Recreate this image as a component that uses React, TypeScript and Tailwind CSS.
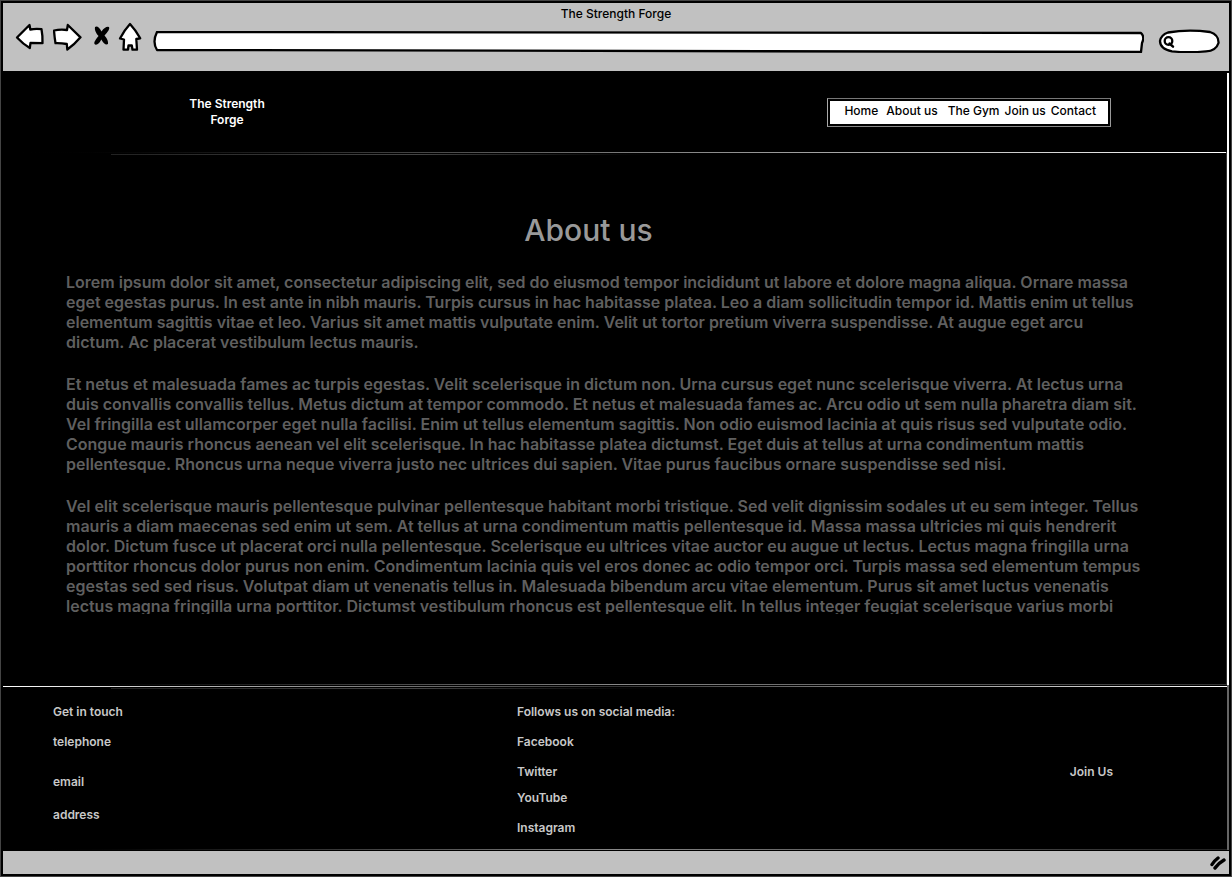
import type { ReactNode } from "react";

const paragraphs: string[][] = [
  [
    "Lorem ipsum dolor sit amet, consectetur adipiscing elit, sed do eiusmod tempor incididunt ut labore et dolore magna aliqua. Ornare massa",
    "eget egestas purus. In est ante in nibh mauris. Turpis cursus in hac habitasse platea. Leo a diam sollicitudin tempor id. Mattis enim ut tellus",
    "elementum sagittis vitae et leo. Varius sit amet mattis vulputate enim. Velit ut tortor pretium viverra suspendisse. At augue eget arcu",
    "dictum. Ac placerat vestibulum lectus mauris.",
  ],
  [
    "Et netus et malesuada fames ac turpis egestas. Velit scelerisque in dictum non. Urna cursus eget nunc scelerisque viverra. At lectus urna",
    "duis convallis convallis tellus. Metus dictum at tempor commodo. Et netus et malesuada fames ac. Arcu odio ut sem nulla pharetra diam sit.",
    "Vel fringilla est ullamcorper eget nulla facilisi. Enim ut tellus elementum sagittis. Non odio euismod lacinia at quis risus sed vulputate odio.",
    "Congue mauris rhoncus aenean vel elit scelerisque. In hac habitasse platea dictumst. Eget duis at tellus at urna condimentum mattis",
    "pellentesque. Rhoncus urna neque viverra justo nec ultrices dui sapien. Vitae purus faucibus ornare suspendisse sed nisi.",
  ],
  [
    "Vel elit scelerisque mauris pellentesque pulvinar pellentesque habitant morbi tristique. Sed velit dignissim sodales ut eu sem integer. Tellus",
    "mauris a diam maecenas sed enim ut sem. At tellus at urna condimentum mattis pellentesque id. Massa massa ultricies mi quis hendrerit",
    "dolor. Dictum fusce ut placerat orci nulla pellentesque. Scelerisque eu ultrices vitae auctor eu augue ut lectus. Lectus magna fringilla urna",
    "porttitor rhoncus dolor purus non enim. Condimentum lacinia quis vel eros donec ac odio tempor orci. Turpis massa sed elementum tempus",
    "egestas sed sed risus. Volutpat diam ut venenatis tellus in. Malesuada bibendum arcu vitae elementum. Purus sit amet luctus venenatis",
    "lectus magna fringilla urna porttitor. Dictumst vestibulum rhoncus est pellentesque elit. In tellus integer feugiat scelerisque varius morbi",
  ],
];

function IconButton({ label, children }: { label: string; children: ReactNode }) {
  return (
    <button type="button" aria-label={label} className="block shrink-0">
      {children}
    </button>
  );
}

const stroke = {
  fill: "#fff",
  stroke: "#000",
  strokeWidth: 2.3,
  strokeLinejoin: "round" as const,
  strokeLinecap: "round" as const,
};

function BrowserBar() {
  return (
    <header className="h-[68px] bg-[#c1c1c1] text-black">
      <p className="h-[18px] pt-px text-center text-[12px] font-medium leading-5">The Strength Forge</p>
      <div className="flex h-8 items-start pl-3 pr-[9px]">
        <IconButton label="Back">
          <svg width="30" height="32" viewBox="15 21 30 32" {...stroke}>
            <path d="M17 37.5 29.5 25 30.3 29.5Q36 28.3 41.5 29.2 42.8 36 42.5 43.2 36 43 30.5 42.8L29.8 48Q23 44 17 37.5Z" />
          </svg>
        </IconButton>
        <IconButton label="Forward">
          <svg className="ml-2" width="30" height="32" viewBox="53 21 30 32" {...stroke}>
            <path d="M54 30.5Q60 29.2 67 30L67.8 25Q74 31 80.5 37.3 74.5 44.5 67.3 49.5L66.8 44Q61 43 55.5 43.2 54.5 37 54 30.5Z" />
          </svg>
        </IconButton>
        <IconButton label="Stop">
          <svg className="ml-2" width="22" height="32" viewBox="91 21 22 32">
            <path d="M95 27Q98 25 101.5 31.5 105.5 26 109 27 110.5 29 104.5 35.5 108.5 40 108 44 105 46 101.3 39.5 98.5 45.5 95 44.5 92.5 43 98.5 36 94 31 95 27Z" />
          </svg>
        </IconButton>
        <IconButton label="Home page">
          <svg className="ml-1" width="26" height="32" viewBox="117 21 26 32" {...stroke}>
            <path d="M130 24Q136 30.5 140.2 38.3L136.3 39 137 49.5 132.5 49.7 131.8 45.5 128.5 45.5 128 49.5 123.5 49.7 124 39.5 120 38.5Q124 30.5 130 24Z" />
          </svg>
        </IconButton>
        <div className="relative ml-[10px] mt-[10px] h-[22px] flex-1">
          <svg className="absolute inset-0 h-full w-full" viewBox="0 0 992 22" preserveAspectRatio="none" {...stroke}>
            <path vectorEffect="non-scaling-stroke" d="M4 1Q500 0 989 2 993 6 990 12L989 21Q500 20 4 19 -1 11 4 1Z" />
          </svg>
          <input aria-label="Address" className="relative h-full w-full bg-transparent px-3 text-[12px] outline-none" />
        </div>
        <div className="relative ml-[14px] mt-2 h-6 w-[62px] shrink-0">
          <svg className="absolute inset-0" width="62" height="24" viewBox="0 0 62 24" {...stroke}>
            <path d="M10 3.5Q30 0 52 3 61 6 60.5 14 58 22 48 22.3 30 24 14 22.3 2 20 2 12 3 6 10 3.5Z" />
            <circle cx="10.5" cy="12" r="3.8" />
            <path d="m11.5 14.5 3.5 3.2" strokeWidth="2.5" />
          </svg>
          <input aria-label="Search" className="relative h-full w-full bg-transparent pl-5 pr-2 text-[12px] outline-none" />
        </div>
      </div>
    </header>
  );
}

function SiteHeader() {
  return (
    <div className="flex h-[81px] items-start justify-between pl-[176px] pr-[116px]">
      <a href="#home" className="mt-[25px] w-24 text-center text-[12px] font-semibold leading-4 text-white">
        The Strength Forge
      </a>
      <div className="mt-[27px] border border-t-[#777] border-r-[#999] border-b-[#888] border-l-[#aaa] p-[2px]">
        <nav aria-label="Main" className="flex h-[23px] items-start bg-white pl-[14px] pr-3 text-[12px] font-medium leading-5 text-black">
          <a href="#home" className="hover:underline">Home</a>
          <a href="#about" className="ml-2 hover:underline">About us</a>
          <a href="#gym" className="ml-[10px] hover:underline">The Gym</a>
          <a href="#join" className="ml-[5px] hover:underline">Join us</a>
          <a href="#contact" className="ml-[5px] hover:underline">Contact</a>
        </nav>
      </div>
    </div>
  );
}

function About() {
  return (
    <main id="about" className="flex-1 border-r border-[#333]">
      <div className="h-px bg-linear-to-r from-black via-[#777] to-white" />
      <div className="ml-[108px] mt-px h-px w-1/2 bg-linear-to-r from-[#222] via-[#444] to-black" />
      <h1 className="mr-[52px] mt-[55px] text-center text-[30px] font-medium leading-10 text-[#999]">About us</h1>
      <div className="ml-[63px] mt-[22px] flex h-[342px] flex-col gap-[22px] overflow-hidden text-[16px] font-semibold leading-5 text-[#5f5f5f]">
        {paragraphs.map((lines, i) => (
          <p key={i}>
            {lines.map((line) => (
              <span key={line} className="block whitespace-nowrap">{line}</span>
            ))}
          </p>
        ))}
      </div>
    </main>
  );
}

function SiteFooter() {
  return (
    <footer className="border-r-2 border-[#666] text-[12px] font-semibold leading-5 text-[#c8c8c8]">
      <div className="mt-px h-px bg-linear-to-r from-white via-[#333] to-white" />
      <div className="ml-[108px] mt-px h-px w-1/2 bg-linear-to-r from-[#222] via-[#444] to-black" />
      <div className="flex h-40 items-start pl-[50px] pt-[13px]">
        <div className="flex w-[464px] flex-col items-start">
          <h2>Get in touch</h2>
          <a href="#telephone" className="mt-[10px]">telephone</a>
          <a href="#email" className="mt-5">email</a>
          <a href="#address" className="mt-[13px]">address</a>
        </div>
        <div className="flex flex-1 flex-col items-start">
          <h2>Follows us on social media:</h2>
          <a href="#facebook" className="mt-[10px]">Facebook</a>
          <a href="#twitter" className="mt-[10px]">Twitter</a>
          <a href="#youtube" className="mt-[6px]">YouTube</a>
          <a href="#instagram" className="mt-[10px]">Instagram</a>
        </div>
        <a href="#join" className="mr-[114px] mt-[60px]">Join Us</a>
      </div>
      <div className="h-px bg-linear-to-r from-black via-[#888] to-[#222]" />
    </footer>
  );
}

export default function App() {
  return (
    <div className="flex min-h-screen flex-col border border-[#444] bg-black font-['Inter',sans-serif]">
      <div className="flex flex-1 flex-col border-2 border-black">
        <BrowserBar />
        <div className="mt-[2px] flex flex-1 flex-col border-r-2 border-white bg-black">
          <div className="-mt-[2px] flex flex-1 flex-col">
            <SiteHeader />
            <About />
            <div className="h-px bg-linear-to-r from-black via-[#888] to-[#333]" />
          </div>
        </div>
        <SiteFooter />
        <div className="mt-px flex h-[23px] items-center justify-end bg-[#c1c1c1] pr-[3px]">
          <svg width="16" height="14" viewBox="0 0 16 14" fill="none" stroke="#000" strokeWidth="3.4" strokeLinecap="round">
            <path d="M2 8.5Q4 5 8 2M5 12Q8 7.5 14 4" />
          </svg>
        </div>
      </div>
    </div>
  );
}
